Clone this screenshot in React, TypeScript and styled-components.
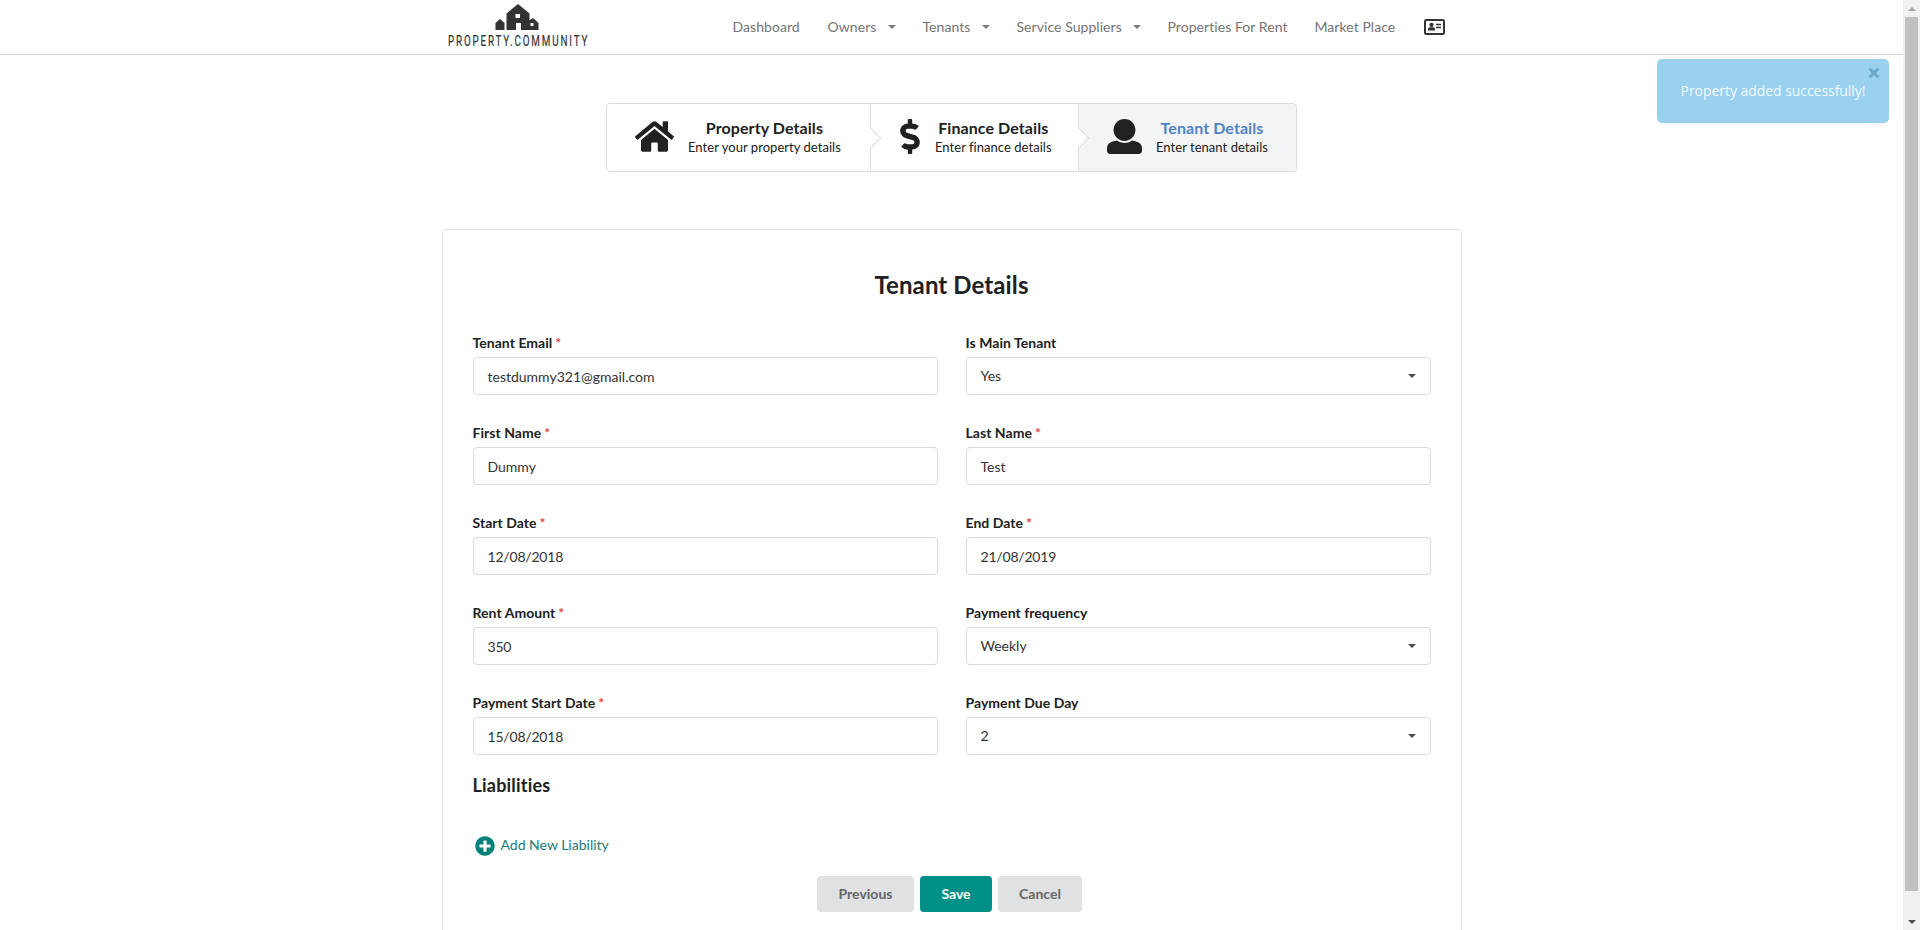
import React from "react";
import styled, { createGlobalStyle, css } from "styled-components";
import { FaDollarSign, FaPlusCircle, FaTimes } from "react-icons/fa";

const Global = createGlobalStyle`
  *, *::before, *::after { box-sizing: border-box; }
  html, body { margin: 0; padding: 0; overflow: hidden; background: #fff; }
  body { font-family: Lato, "Liberation Sans", sans-serif; font-size: 14px; line-height: 20px; color: #212122; }
`;

const Window = styled.div`
  display: flex;
  width: 1920px;
  height: 930px;
  overflow: hidden;
`;

const Page = styled.div`
  position: relative;
  flex: 1;
  display: flex;
  flex-direction: column;
  align-items: center;
`;

const Header = styled.header`
  flex: none;
  width: 100%;
  height: 55px;
  border-bottom: 1px solid #d4d4d5;
`;

const HeaderInner = styled.div`
  width: 1020px;
  height: 54px;
  margin: 0 auto;
  padding-left: 6px;
  display: flex;
  align-items: center;
`;

const Nav = styled.nav`
  display: flex;
  align-items: center;
  margin-left: 141px;
  color: #747474;
`;

const NavLink = styled.a<{ $space: number }>`
  display: flex;
  align-items: center;
  justify-content: space-between;
  width: ${p => p.$space}px;
  margin-right: 27px;
  letter-spacing: 0.06px;
  white-space: nowrap;
`;

const Caret = styled.span<{ $dark?: boolean }>`
  width: 0;
  height: 0;
  border: 4px solid transparent;
  border-bottom-width: 0;
  border-top-color: ${p => (p.$dark ? "#4a4a4a" : "#7c7c7c")};
`;

const Steps = styled.div`
  flex: none;
  display: flex;
  width: 691px;
  height: 69px;
  margin-top: 48px;
  border: 1px solid #dcdddd;
  border-radius: 4px;
`;

const Step = styled.div<{ $width: number; $active?: boolean }>`
  position: relative;
  display: flex;
  align-items: center;
  width: ${p => p.$width}px;
  padding-left: 28px;
  background: ${p => (p.$active ? "#f3f4f5" : "#fff")};
  border-right: ${p => (p.$active ? 0 : 1)}px solid #dcdddd;
  border-radius: ${p => (p.$active ? "0 4px 4px 0" : "4px 0 0 4px")};
`;

const StepArrow = styled.span`
  position: absolute;
  z-index: 1;
  top: 50%;
  right: -8px;
  width: 16px;
  height: 16px;
  background: #fff;
  border: solid #dcdddd;
  border-width: 0 1px 1px 0;
  transform: translateY(-50%) rotate(-45deg);
`;

const StepIcon = styled.span<{ $width: number }>`
  display: flex;
  width: ${p => p.$width}px;
  margin: 0 14px 2px 0;
  justify-content: center;
  color: #212122;
  font-size: 35px;
`;

const StepText = styled.div`
  text-align: center;
  white-space: nowrap;
`;

const StepTitle = styled.div<{ $active?: boolean }>`
  font-size: 16px;
  line-height: 18px;
  letter-spacing: 0.08px;
  font-weight: 700;
  color: ${p => (p.$active ? "#4f84c3" : "#212122")};
`;

const StepNote = styled.div`
  margin-top: 1px;
  font-size: 13px;
  line-height: 18px;
  letter-spacing: 0.04px;
`;

const Card = styled.main`
  flex: none;
  width: 1020px;
  height: 740px;
  margin-top: 57px;
  padding: 41px 30px 0;
  border: 1px solid #e4e5e6;
  border-radius: 4px;
`;

const Title = styled.h2`
  margin: 0;
  font-size: 24px;
  line-height: 28px;
  letter-spacing: 0.1px;
  font-weight: 700;
  text-align: center;
`;

const Form = styled.form`
  display: grid;
  grid-template-columns: 465px 465px;
  column-gap: 28px;
  grid-auto-rows: 90px;
  margin-top: 34px;
`;

const Field = styled.div``;

const Label = styled.label`
  display: block;
  height: 24px;
  font-size: 14px;
  line-height: 20px;
  letter-spacing: 0.04px;
  font-weight: 700;
`;

const Required = styled.span`
  margin-left: 3px;
  color: #e04545;
`;

const Control = styled.div<{ $select?: boolean; $numeric?: boolean }>`
  display: flex;
  align-items: center;
  justify-content: space-between;
  height: 38px;
  padding: ${p => (p.$select ? "0 14px 0" : "2px 14px 0")};
  border: 1px solid #dadbdc;
  border-radius: 4px;
  color: #333;
  letter-spacing: ${p => (p.$numeric ? "-0.2px" : "0")};
`;

const Section = styled.h3`
  margin: -10px 0 0;
  font-size: 18px;
  line-height: 24px;
  letter-spacing: 0.2px;
  font-weight: 700;
`;

const AddLink = styled.a`
  display: flex;
  align-items: center;
  margin: 37px 0 0 2px;
  height: 22px;
  color: #177d78;
  svg { width: 20px; height: 20px; margin: 1px 6px 0 0; color: #07807a; }
`;

const Actions = styled.div`
  display: flex;
  justify-content: center;
  gap: 6px;
  margin: 20px 4px 0 0;
`;

const Button = styled.button<{ $width: number; $primary?: boolean }>`
  width: ${p => p.$width}px;
  height: 36px;
  padding: 0;
  border: 0;
  border-radius: 4px;
  font: 700 14px/14px Lato, sans-serif;
  color: ${p => (p.$primary ? "#fff" : "#666")};
  background: ${p => (p.$primary ? "#009088" : "#e0e1e2")};
`;

const Toast = styled.div`
  position: absolute;
  top: 59px;
  right: 14px;
  width: 232px;
  height: 64px;
  display: flex;
  align-items: center;
  justify-content: center;
  border-radius: 5px;
  background: #99d1ef;
  color: #f1faff;
  font: 500 14px/20px "Open Sans", "Noto Sans", sans-serif;
  letter-spacing: -0.05px;
`;

const ToastClose = styled(FaTimes)`
  position: absolute;
  top: 7px;
  right: 8px;
  width: 14px;
  height: 14px;
  color: #69a9c8;
  stroke: #69a9c8;
  stroke-width: 20px;
`;

const Scrollbar = styled.div`
  display: flex;
  flex-direction: column;
  align-items: center;
  width: 17px;
  background: #f1f1f1;
`;

const ScrollArrow = styled.span<{ $down?: boolean }>`
  height: 17px;
  display: flex;
  align-items: center;
  &::after {
    content: "";
    border: 4px solid transparent;
    ${p => p.$down
      ? css`border-bottom-width: 0; border-top-color: #505050;`
      : css`border-top-width: 0; border-bottom-color: #a3a3a3;`}
  }
`;

const ScrollThumb = styled.span`
  width: 13px;
  height: 874px;
  margin-bottom: auto;
  background: #c1c1c1;
`;

const Logo = () => (
  <svg width="144" height="50" viewBox="0 0 144 50">
    <g fill="#333">
      <path fillRule="evenodd" d="M70 2L81.500 11.500V28H73V21H68V28H58.500V11.500ZM67.500 12V16H72V12Z" />
      <path d="M47.500 28V21L52 17L56.500 21V28Z" />
      <path fillRule="evenodd" d="M80 19L85 16L90.500 21V28H80ZM82.500 21V24H85.500V21Z" />
    </g>
    <g transform="translate(0 44) scale(.68 1)">
      <text x="0" y="0" fill="#333" stroke="#333" strokeWidth="0.2" fontFamily="Roboto, sans-serif" fontSize="14.5" textLength="205">
        PROPERTY.COMMUNITY
      </text>
    </g>
  </svg>
);

const AddressCardIcon = () => (
  <svg width="21" height="16" viewBox="0 0 21 16">
    <rect x="1" y="1" width="19" height="14" rx="1.300" fill="none" stroke="#333" strokeWidth="2" />
    <circle cx="7.500" cy="5.900" r="2.100" fill="#333" />
    <path d="M4 11.400V10.200Q4 8.300 5.800 8.200H9.200Q11 8.300 11 10.200V11.400Z" fill="#333" />
    <path d="M12 5.500H17M12 8.500H17" stroke="#333" strokeWidth="1.300" />
  </svg>
);

const HomeIcon = () => (
  <svg width="39" height="35" viewBox="0 0 576 512" fill="currentColor">
    <path d="M488 312.700V456c0 13.300-10.700 24-24 24H348c-6.600 0-12-5.400-12-12V356c0-6.600-5.400-12-12-12h-72c-6.600 0-12 5.400-12 12v112c0 6.600-5.400 12-12 12H112c-13.300 0-24-10.700-24-24V312.700c0-3.600 1.600-7 4.400-9.300l188-154.800c4.400-3.600 10.800-3.600 15.300 0l188 154.800c2.700 2.300 4.300 5.700 4.300 9.300zm83.600-60.900L488 182.900V44.400c0-6.600-5.400-12-12-12h-56c-6.600 0-12 5.400-12 12V117l-89.500-73.700c-17.700-14.600-43.300-14.600-61 0L4.400 251.800c-5.100 4.200-5.800 11.800-1.600 16.900l25.500 31c4.200 5.100 11.800 5.800 16.900 1.600l235.200-193.700c4.400-3.600 10.800-3.600 15.300 0l235.200 193.700c5.100 4.200 12.700 3.500 16.900-1.600l25.500-31c4.200-5.200 3.400-12.700-1.700-16.900z" />
  </svg>
);

const UserIcon = () => (
  <svg width="35" height="35" viewBox="0 0 512 512" fill="currentColor">
    <path d="M256 0c88.366 0 160 71.634 160 160s-71.634 160-160 160S96 248.366 96 160 167.634 0 256 0zm183.283 333.821l-71.313-17.828c-74.923 53.89-165.738 41.864-223.94 0l-71.313 17.828C29.981 344.505 0 382.903 0 426.955V464c0 26.51 21.490 48 48 48h416c26.510 0 48-21.490 48-48v-37.045c0-44.052-29.981-82.450-72.717-93.134z" />
  </svg>
);

const links = [
  { text: "Dashboard", space: 68 },
  { text: "Owners", space: 68, menu: true },
  { text: "Tenants", space: 67, menu: true },
  { text: "Service Suppliers", space: 124, menu: true },
  { text: "Properties For Rent", space: 120 },
  { text: "Market Place", space: 82 },
];

const fields = [
  { label: "Tenant Email", value: "testdummy321@gmail.com", required: true },
  { label: "Is Main Tenant", value: "Yes", select: true },
  { label: "First Name", value: "Dummy", required: true },
  { label: "Last Name", value: "Test", required: true },
  { label: "Start Date", value: "12/08/2018", required: true, numeric: true },
  { label: "End Date", value: "21/08/2019", required: true, numeric: true },
  { label: "Rent Amount", value: "350", required: true, numeric: true },
  { label: "Payment frequency", value: "Weekly", select: true },
  { label: "Payment Start Date", value: "15/08/2018", required: true, numeric: true },
  { label: "Payment Due Day", value: "2", select: true },
];

const steps = [
  { title: "Property Details", note: "Enter your property details", width: 264, iconWidth: 39, icon: <HomeIcon /> },
  { title: "Finance Details", note: "Enter finance details", width: 208, iconWidth: 22, icon: <FaDollarSign /> },
  { title: "Tenant Details", note: "Enter tenant details", width: 217, iconWidth: 35, icon: <UserIcon />, active: true },
];

export default function App() {
  return (
    <Window>
      <Global />
      <Page>
        <Header>
          <HeaderInner>
            <Logo />
            <Nav>
              {links.map(l => (
                <NavLink key={l.text} $space={l.space}>
                  {l.text}
                  {l.menu && <Caret />}
                </NavLink>
              ))}
              <AddressCardIcon />
            </Nav>
          </HeaderInner>
        </Header>
        <Steps>
          {steps.map(s => (
            <Step key={s.title} $width={s.width} $active={s.active}>
              <StepIcon $width={s.iconWidth}>{s.icon}</StepIcon>
              <StepText>
                <StepTitle $active={s.active}>{s.title}</StepTitle>
                <StepNote>{s.note}</StepNote>
              </StepText>
              {!s.active && <StepArrow />}
            </Step>
          ))}
        </Steps>
        <Card>
          <Title>Tenant Details</Title>
          <Form>
            {fields.map(f => (
              <Field key={f.label}>
                <Label>
                  {f.label}
                  {f.required && <Required>*</Required>}
                </Label>
                <Control $select={f.select} $numeric={f.numeric}>
                  {f.value}
                  {f.select && <Caret $dark />}
                </Control>
              </Field>
            ))}
          </Form>
          <Section>Liabilities</Section>
          <AddLink>
            <FaPlusCircle />
            Add New Liability
          </AddLink>
          <Actions>
            <Button $width={97}>Previous</Button>
            <Button $width={72} $primary>Save</Button>
            <Button $width={84}>Cancel</Button>
          </Actions>
        </Card>
        <Toast>
          Property added successfully!
          <ToastClose />
        </Toast>
      </Page>
      <Scrollbar>
        <ScrollArrow />
        <ScrollThumb />
        <ScrollArrow $down />
      </Scrollbar>
    </Window>
  );
}
